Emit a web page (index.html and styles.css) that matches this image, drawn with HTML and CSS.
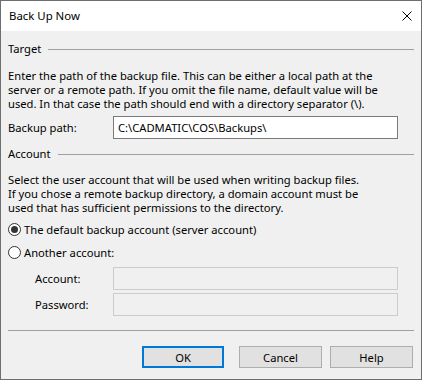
FILE: index.html
```html
<!DOCTYPE html>
<html>
<head>
<meta charset="utf-8">
<title>Back Up Now</title>
<link rel="stylesheet" href="styles.css">
</head>
<body>
<div class="window">
  <div class="titlebar">
    <span class="title">Back Up Now</span>
    <svg class="close" width="10" height="10" viewBox="0 0 10 10"><path d="M0.5 0.5 L9.5 9.5 M9.5 0.5 L0.5 9.5" stroke="#000" stroke-width="1" fill="none"/></svg>
  </div>
  <div class="content">
    <div class="group-head head-target"><span>Target</span><div class="rule"></div></div>
    <div class="para p1">
      <div>Enter the path of the backup file. This can be either a local path at the</div>
      <div>server or a remote path. If you omit the file name, default value will be</div>
      <div>used. In that case the path should end with a directory separator (\).</div>
    </div>
    <div class="field-row path-row">
      <span class="label">Backup path:</span>
      <div class="input">C:\CADMATIC\COS\Backups\</div>
    </div>
    <div class="group-head head-account"><span>Account</span><div class="rule"></div></div>
    <div class="para p2">
      <div>Select the user account that will be used when writing backup files.</div>
      <div>If you chose a remote backup directory, a domain account must be</div>
      <div>used that has sufficient permissions to the directory.</div>
    </div>
    <div class="radio-row r1"><span class="radio checked"></span><span>The default backup account (server account)</span></div>
    <div class="radio-row r2"><span class="radio"></span><span>Another account:</span></div>
    <div class="field-row sub-row acc-row">
      <span class="label sub">Account:</span>
      <div class="input disabled"></div>
    </div>
    <div class="field-row sub-row pw-row">
      <span class="label sub">Password:</span>
      <div class="input disabled"></div>
    </div>
    <div class="separator"></div>
    <div class="buttons">
      <div class="btn btn-ok">OK</div>
      <div class="btn btn-cancel">Cancel</div>
      <div class="btn btn-help">Help</div>
    </div>
  </div>
</div>
</body>
</html>
```

FILE: styles.css
```css
* { box-sizing: border-box; }
html, body { margin: 0; padding: 0; }
body {
  font-family: "Noto Sans", "Open Sans", sans-serif;
  font-size: 11.2px;
  color: #000;
  background: #f0f0f0;
}
.window {
  width: 422px;
  height: 380px;
  border: 1px solid #6e6e6e;
  background: #f0f0f0;
  display: flex;
  flex-direction: column;
}
.titlebar {
  height: 30px;
  background: #fff;
  display: flex;
  align-items: center;
  padding-left: 8px;
  padding-right: 9px;
  justify-content: space-between;
}
.title { line-height: 16px; font-size: 11.4px; }
.close { display: block; }
.content {
  padding: 0 7px;
  display: flex;
  flex-direction: column;
}
.group-head {
  display: flex;
  align-items: center;
  height: 14px;
  line-height: 14px;
  white-space: nowrap;
}
.group-head .rule {
  flex: 1;
  height: 1px;
  background: #a0a0a0;
  margin-left: 7px;
  margin-top: 1px;
}
.head-target { margin-top: 11px; }
.head-account { margin-top: 8px; }
.para { white-space: nowrap; line-height: 14px; }
.p1 { margin-top: 13px; }
.p2 { margin-top: 12px; }
.field-row {
  display: flex;
  align-items: center;
}
.label { width: 105px; flex: none; }
.label.sub { padding-left: 27px; }
.input {
  width: 285px;
  height: 23px;
  border: 1px solid #7a7a7a;
  background: #fff;
  padding-left: 4px;
  line-height: 21px;
  white-space: nowrap;
}
.input.disabled {
  border-color: #cccccc;
  background: #f0f0f0;
}
.path-row { margin-top: 5px; }
.acc-row { margin-top: 7px; }
.pw-row { margin-top: 3px; }
.radio-row {
  display: flex;
  align-items: center;
  height: 16px;
}
.r1 { margin-top: 6px; }
.r2 { margin-top: 7px; }
.radio {
  width: 13px;
  height: 13px;
  border: 1px solid #333;
  border-radius: 50%;
  background: #fff;
  margin-right: 3px;
  position: relative;
  flex: none;
}
.radio.checked::after {
  content: "";
  position: absolute;
  left: 2px;
  top: 2px;
  width: 7px;
  height: 7px;
  border-radius: 50%;
  background: #333;
}
.separator {
  height: 1px;
  background: #a0a0a0;
  margin-top: 14px;
}
.buttons {
  display: flex;
  justify-content: flex-end;
  margin-top: 15px;
  padding-right: 1px;
}
.btn {
  height: 22px;
  border: 1px solid #adadad;
  background: #e1e1e1;
  display: flex;
  align-items: center;
  justify-content: center;
  width: 83px;
}
.btn-ok {
  width: 82px;
  border: 2px solid #0078d7;
  margin-right: 15px;
}
.btn-cancel { margin-right: 8px; }
```
